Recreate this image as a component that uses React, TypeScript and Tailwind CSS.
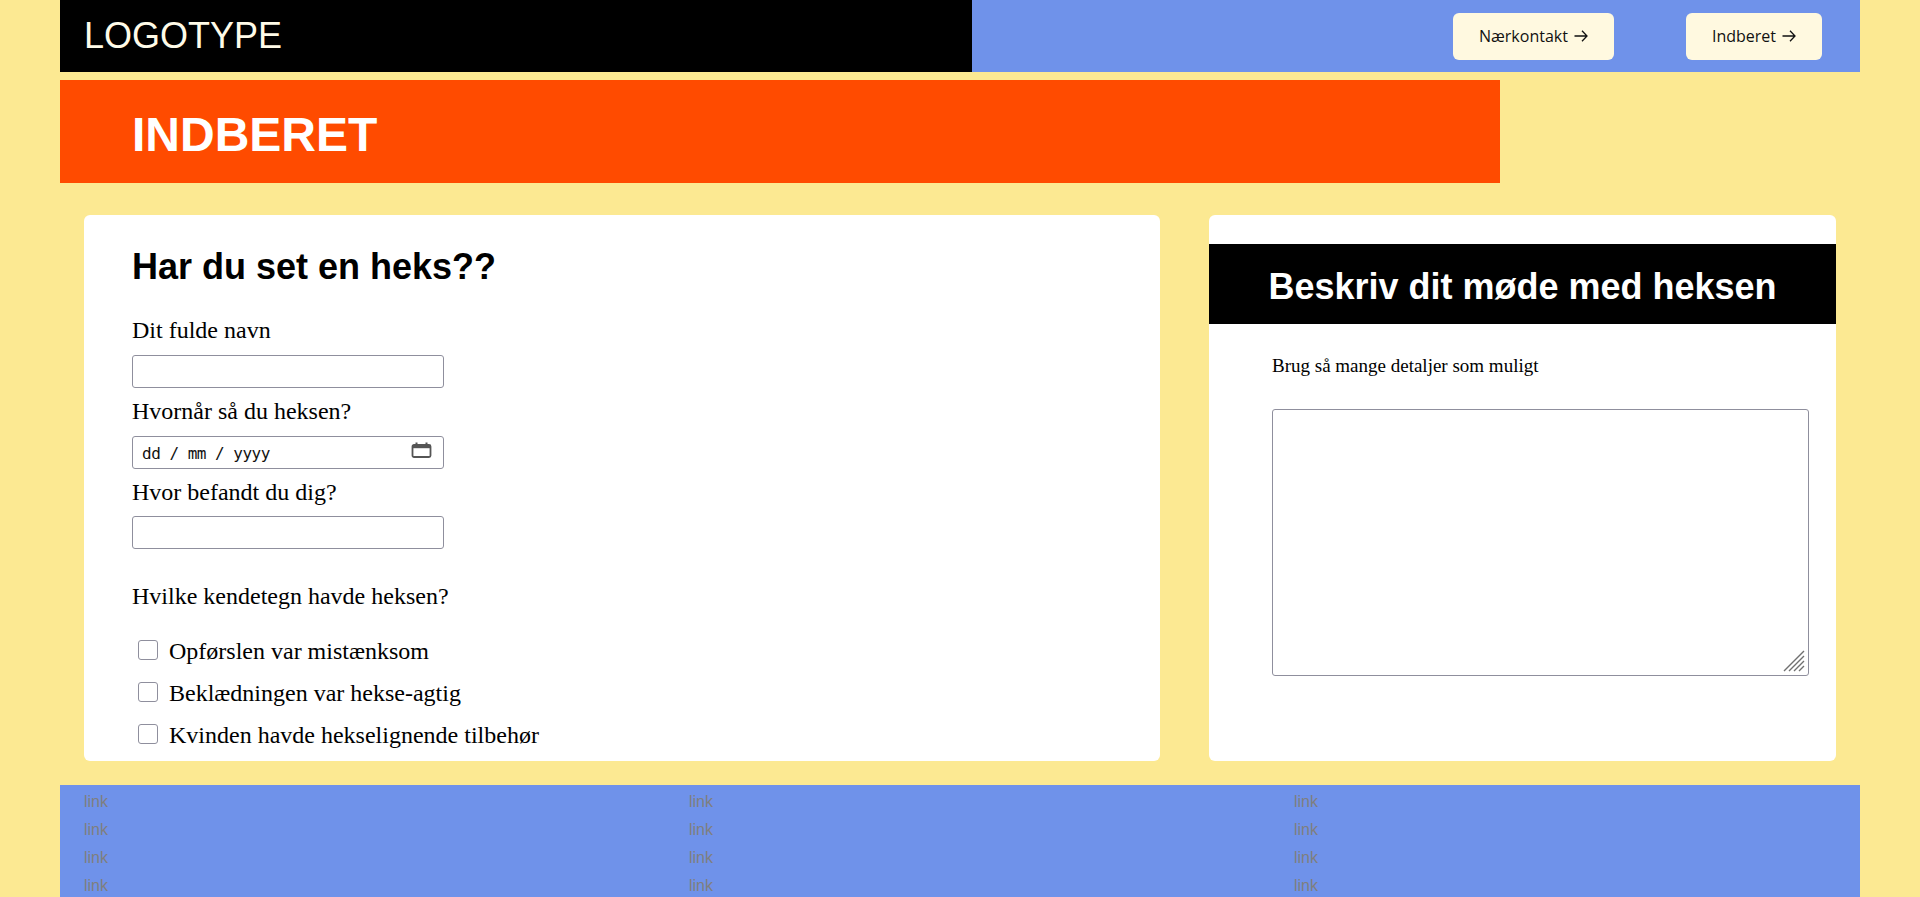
import React from "react";

const ArrowGlyph = () => (
  <svg width="14" height="12" viewBox="0 0 14 12" fill="none" stroke="#111" strokeWidth="1.3" className="ml-[6px]">
    <path d="M0.5 6h12.5M8 0.8L13 6L8 11.2" />
  </svg>
);

const NavButton = ({ label }: { label: string }) => (
  <button className="flex h-[47px] items-center rounded-md bg-[#fff9e0] px-[26px] font-['Open_Sans',sans-serif] text-[16px] text-[#111]">
    <span>{label}</span>
    <ArrowGlyph />
  </button>
);

const CalendarIcon = () => (
  <svg width="21" height="16" viewBox="0 0 21 16" className="absolute right-[12px] top-[6px]">
    <rect x="1.5" y="3" width="18" height="12" rx="1.5" fill="none" stroke="#555" strokeWidth="1.8" />
    <rect x="1.5" y="3" width="18" height="3.2" fill="#555" />
    <rect x="4.5" y="0.5" width="2" height="3" fill="#555" />
    <rect x="14.5" y="0.5" width="2" height="3" fill="#555" />
  </svg>
);

const ResizeGrip = () => (
  <svg width="22" height="22" viewBox="0 0 22 22" className="pointer-events-none absolute bottom-[4px] right-[4px]" stroke="#707070" strokeWidth="1.4">
    <path d="M21 1L1 21M21 6L6 21M21 11L11 21M21 16L16 21" />
  </svg>
);

const inputClass = "h-[33px] w-[312px] rounded-[3px] border border-[#8f8f9d] bg-white";

const Checkbox = ({ label }: { label: string }) => (
  <label className="flex h-[27px] items-start">
    <input type="checkbox" className="ml-[6px] mt-[2px] h-[20px] w-[20px] appearance-none rounded-[3px] border border-[#8f8f9d] bg-white" />
    <span className="ml-[11px]">{label}</span>
  </label>
);

const links = ["link", "link", "link", "link"];

export default function App() {
  return (
    <div className="min-h-screen bg-[#fce992] font-['Liberation_Sans',Arial,sans-serif]">
      <div className="mx-[60px]">
        {/* Header */}
        <header className="flex h-[72px]">
          <div className="flex w-[912px] items-center bg-black pl-[24px]">
            <span className="text-[36px] leading-none text-[#fffbe8]">LOGOTYPE</span>
          </div>
          <nav className="flex flex-1 items-center justify-end gap-[72px] bg-[#6f92ea] pr-[38px]">
            <NavButton label="Nærkontakt" />
            <NavButton label="Indberet" />
          </nav>
        </header>

        {/* Page title */}
        <div className="mt-[8px] flex h-[103px] w-[1440px] items-center bg-[#ff4b00] pl-[72px] pt-[6px]">
          <h1 className="text-[48px] font-bold leading-none text-white">INDBERET</h1>
        </div>

        <main className="grid grid-cols-[1076px_1fr] gap-[49px] px-[24px] pb-[24px] pt-[32px]">
          {/* Form card */}
          <section className="flex flex-col rounded-md bg-white pb-[12px] pl-[48px] pt-[31px] font-['Liberation_Serif','Times_New_Roman',serif] text-[24px] leading-[27px] text-black">
            <h2 className="font-['Liberation_Sans',Arial,sans-serif] text-[36px] font-bold leading-[41px]">
              Har du set en heks??
            </h2>
            <label className="mt-[30px]">Dit fulde navn</label>
            <input type="text" className={`mt-[11px] ${inputClass}`} />
            <label className="mt-[10px]">Hvornår så du heksen?</label>
            <div className="relative mt-[11px] w-[312px]">
              <input
                type="text"
                readOnly
                placeholder="dd / mm / yyyy"
                className={`${inputClass} pl-[9px] pt-[2px] font-['DejaVu_Sans_Mono',monospace] text-[16px] tracking-[-0.5px] placeholder:text-[#111]`}
              />
              <CalendarIcon />
            </div>
            <label className="mt-[10px]">Hvor befandt du dig?</label>
            <input type="text" className={`mt-[10px] ${inputClass}`} />
            <p className="mt-[34px]">Hvilke kendetegn havde heksen?</p>
            <div className="mt-[28px] flex flex-col gap-[15px]">
              <Checkbox label="Opførslen var mistænksom" />
              <Checkbox label="Beklædningen var hekse-agtig" />
              <Checkbox label="Kvinden havde hekselignende tilbehør" />
            </div>
          </section>

          {/* Description card */}
          <section className="flex flex-col rounded-md bg-white pt-[29px]">
            <div className="h-[80px] bg-black pt-[22px] text-center">
              <h2 className="text-[36px] font-bold leading-[41px] text-white">Beskriv dit møde med heksen</h2>
            </div>
            <p className="mt-[31px] pl-[63px] font-['Liberation_Serif','Times_New_Roman',serif] text-[19px] leading-[22px] text-black">
              Brug så mange detaljer som muligt
            </p>
            <div className="relative ml-[63px] mt-[32px] h-[267px] w-[537px]">
              <textarea className="h-full w-full resize-none rounded-[3px] border border-[#8f8f9d] bg-white" />
              <ResizeGrip />
            </div>
          </section>
        </main>

        {/* Footer */}
        <footer className="grid grid-cols-[605px_605px_1fr] bg-[#6f92ea] pb-[24px] pl-[24px] pt-[3px]">
          {[0, 1, 2].map((col) => (
            <ul key={col} className="flex flex-col">
              {links.map((l, i) => (
                <li key={i} className="text-[16px] leading-[28px] text-[#7f7f7f]">
                  {l}
                </li>
              ))}
            </ul>
          ))}
        </footer>
      </div>
    </div>
  );
}
